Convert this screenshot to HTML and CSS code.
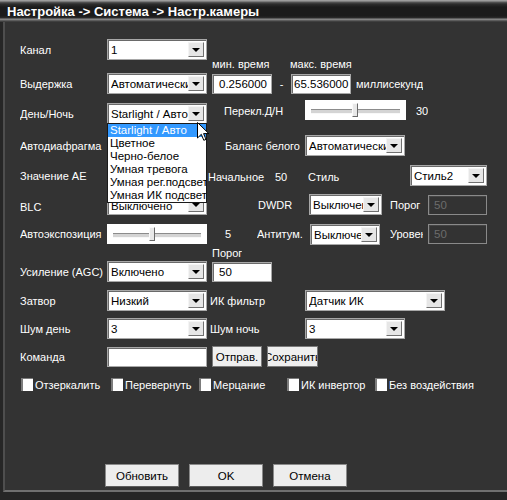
FILE: index.html
```html
<!DOCTYPE html>
<html lang="ru">
<head>
<meta charset="UTF-8">
<meta name="viewport" content="width=device-width, initial-scale=1.0">
<title>Настр.камеры</title>
<link rel="stylesheet" href="styles.css">
</head>
<body>

<div class="window">
  <div class="titlebar">Настройка -&gt; Система -&gt; Настр.камеры</div>

  <div class="content">
    <div class="row">
      <span class="label w87">Канал</span>
      <div class="select w100"><span class="val">1</span><span class="arrow"></span></div>
    </div>

    <div class="caption cap-time">
      <span class="label w78">мин. время</span>
      <span class="label">макс. время</span>
    </div>

    <div class="row mt3">
      <span class="label w87">Выдержка</span>
      <div class="select w100"><span class="val">Автоматически</span><span class="arrow"></span></div>
      <div class="input w60 ml5">0.256000</div>
      <span class="dash">-</span>
      <div class="input input-long w60">65.536000</div>
      <span class="label ml5">миллисекунд</span>
    </div>

    <div class="row mt9">
      <span class="label w87">День/Ночь</span>
      <div class="select w100"><span class="val">Starlight / Авто</span><span class="arrow"></span></div>
      <span class="label raised ml17 w81">Перекл.Д/Н</span>
      <div class="slider slider-top w101"><span class="thumb" style="left: 47px"></span></div>
      <span class="label raised ml10">30</span>
    </div>

    <div class="row mt11">
      <span class="label w87">Автодиафрагма</span>
      <!-- covered by the open list -->
      <div class="select w100"><span class="val"></span><span class="arrow"></span></div>
      <span class="label ml18 w80">Баланс белого</span>
      <div class="select w100"><span class="val">Автоматически</span><span class="arrow"></span></div>
    </div>

    <div class="row mt9">
      <span class="label w188">Значение AE</span>
      <span class="label w67 low">Начальное</span>
      <span class="label w33 low">50</span>
      <span class="label w102 low">Стиль</span>
      <div class="select w77"><span class="val">Стиль2</span><span class="arrow"></span></div>
    </div>

    <div class="row mt8">
      <span class="label w87 low2">BLC</span>
      <div class="select w100"><span class="val val-low">Выключено</span><span class="arrow"></span></div>
      <span class="label ml51 w51">DWDR</span>
      <div class="select w73"><span class="val">Выключено</span><span class="arrow"></span></div>
      <span class="label ml8 w38">Порог</span>
      <div class="input disabled w59">50</div>
    </div>

    <div class="row mt8">
      <span class="label w87">Автоэкспозиция</span>
      <div class="slider w100"><span class="thumb" style="left: 42px"></span></div>
      <span class="label ml18 w32">5</span>
      <span class="label w53">Антитум.</span>
      <div class="select select-low w70"><span class="val">Выключено</span><span class="arrow"></span></div>
      <span class="label ml10 w33">Уровень</span>
      <div class="input disabled ml5 w59">50</div>
    </div>

    <div class="caption cap-agc">
      <span class="label">Порог</span>
    </div>

    <div class="row mt2">
      <span class="label w87">Усиление (AGC)</span>
      <div class="select w100"><span class="val">Включено</span><span class="arrow"></span></div>
      <div class="input w60 ml5">50</div>
    </div>

    <div class="row mt8">
      <span class="label w87">Затвор</span>
      <div class="select w100"><span class="val">Низкий</span><span class="arrow"></span></div>
      <span class="label ml3 w95">ИК фильтр</span>
      <div class="select w140"><span class="val">Датчик ИК</span><span class="arrow"></span></div>
    </div>

    <div class="row mt7">
      <span class="label w87">Шум день</span>
      <div class="select w100"><span class="val">3</span><span class="arrow"></span></div>
      <span class="label ml3 w95">Шум ночь</span>
      <div class="select w100"><span class="val">3</span><span class="arrow"></span></div>
    </div>

    <div class="row mt7">
      <span class="label w87">Команда</span>
      <div class="input w100"></div>
      <div class="btn ml5 w50">Отправ.</div>
      <div class="btn ml5 w51"><span>Сохранить</span></div>
    </div>

    <div class="checks">
      <label class="check w90"><span class="box"></span>Отзеркалить</label>
      <label class="check w88"><span class="box"></span>Перевернуть</label>
      <label class="check w88"><span class="box"></span>Мерцание</label>
      <label class="check w88"><span class="box"></span>ИК инвертор</label>
      <label class="check"><span class="box"></span>Без воздействия</label>
    </div>

    <div class="footer">
      <div class="btn btn-big">Обновить</div>
      <div class="btn btn-big">OK</div>
      <div class="btn btn-big">Отмена</div>
    </div>
  </div>

  <!-- open list of the День/Ночь select -->
  <div class="dropdown">
    <div class="sel">Starlight / Авто</div>
    <div>Цветное</div>
    <div>Черно-белое</div>
    <div>Умная тревога</div>
    <div>Умная рег.подсветка</div>
    <div>Умная ИК подсветка</div>
  </div>

  <svg class="cursor" width="13" height="20" viewBox="0 0 13 20">
    <path d="M0.5 0.5 L0.5 16 L4.3 12.3 L6.8 18.3 L9 17.4 L6.6 11.6 L11.8 11.6 Z" fill="#fff" stroke="#000" stroke-width="1"/>
  </svg>
</div>

</body>
</html>
```

FILE: styles.css
```css
* {
  box-sizing: border-box;
}

body {
  margin: 0;
  background-color: #1e1e1e;
  font-family: "Liberation Sans", Arial, sans-serif;
  font-size: 11px;
  color: #fff;
}

.window {
  position: relative;
  width: 507px;
  height: 500px;
  background-color: #262626;
  overflow: hidden;
}

.titlebar {
  height: 22px;
  padding-left: 7px;
  line-height: 23px;
  font-size: 13px;
  font-weight: bold;
  white-space: nowrap;
  background: linear-gradient(to bottom, #9c9c9c 0, #9c9c9c 1px, #5a5a5a 2px, #2e2e2e 4px, #1b1b1b 7px, #1b1b1b 16px, #2c2c2c 18px, #8c8c8c 19px, #7a7a7a 20px, #404040 21px, #404040 22px);
}

.content {
  margin-left: 3px;
  height: 470px;
  background-color: #333;
  border-left: 2px solid #4e4e4e;
  border-bottom: 2px solid #707070;
  padding: 17px 0 0 15px;
}

.row {
  display: flex;
  align-items: center;
  height: 21px;
}

.caption {
  display: flex;
  align-items: center;
  height: 13px;
}

.cap-time {
  margin-top: -3px;
  padding-left: 192px;
}

.cap-agc {
  margin-top: 2px;
  padding-left: 192px;
}

.label {
  flex: none;
  white-space: nowrap;
  overflow: hidden;
}

.raised {
  margin-bottom: 6px;
}

.low {
  margin-top: 3px;
}

.low2 {
  margin-top: 5px;
}

/* widths */
.w32 { width: 32px; }
.w33 { width: 33px; }
.w38 { width: 38px; }
.w50 { width: 50px; }
.w51 { width: 51px; }
.w53 { width: 53px; }
.w59 { width: 59px; }
.w60 { width: 60px; }
.w67 { width: 67px; }
.w70 { width: 70px; }
.w73 { width: 73px; }
.w77 { width: 77px; }
.w78 { width: 78px; }
.w80 { width: 80px; }
.w81 { width: 81px; }
.w87 { width: 87px; }
.w88 { width: 88px; }
.w90 { width: 90px; }
.w95 { width: 95px; }
.w100 { width: 100px; }
.w101 { width: 101px; }
.w102 { width: 102px; }
.w140 { width: 140px; }
.w188 { width: 188px; }

/* spacing */
.ml3 { margin-left: 3px; }
.ml5 { margin-left: 5px; }
.ml8 { margin-left: 8px; }
.ml10 { margin-left: 10px; }
.ml17 { margin-left: 17px; }
.ml18 { margin-left: 18px; }
.ml51 { margin-left: 51px; }
.mt2 { margin-top: 2px; }
.mt3 { margin-top: 3px; }
.mt7 { margin-top: 7px; }
.mt8 { margin-top: 8px; }
.mt9 { margin-top: 9px; }
.mt11 { margin-top: 11px; }

.select {
  flex: none;
  display: flex;
  align-items: center;
  height: 21px;
  padding: 0 2px 0 3px;
  background-color: #fff;
  border: 1px solid #a8a8a8;
  box-shadow: inset 1px 1px 0 #6a6a6a;
  color: #000;
  font-size: 11.5px;
}

.select-low {
  margin-top: 2px;
}

.select .val {
  flex: 1;
  min-width: 0;
  overflow: hidden;
  white-space: nowrap;
}

.select .val-low {
  padding-top: 3px;
}

.arrow {
  flex: none;
  display: flex;
  align-items: center;
  justify-content: center;
  width: 16px;
  height: 15px;
  background-color: #e6e6e6;
  border: 1px solid;
  border-color: #f4f4f4 #707070 #707070 #f4f4f4;
}

.arrow::after {
  content: "";
  border-left: 4px solid transparent;
  border-right: 4px solid transparent;
  border-top: 4px solid #000;
}

.input {
  flex: none;
  display: flex;
  align-items: center;
  height: 20px;
  padding-left: 6px;
  background-color: #fff;
  border: 1px solid #a8a8a8;
  box-shadow: inset 1px 1px 0 #6a6a6a;
  color: #000;
  font-size: 11.5px;
  white-space: nowrap;
  overflow: hidden;
}

.input-long {
  padding-left: 2px;
}

.input.disabled {
  background-color: #333;
  border-color: #8a8a8a;
  box-shadow: inset 1px 1px 0 #444;
  color: #6c6c6c;
  padding-left: 5px;
}

.dash {
  flex: none;
  width: 19px;
  text-align: center;
}

.slider {
  position: relative;
  flex: none;
  height: 20px;
  background-color: #fff;
}

.slider-top {
  align-self: flex-start;
  margin-top: -3px;
}

.slider::before {
  content: "";
  position: absolute;
  left: 6px;
  right: 6px;
  top: 9px;
  height: 3px;
  background-color: #d4d4d4;
  border-top: 1px solid #8c8c8c;
  border-bottom: 1px solid #f8f8f8;
}

.thumb {
  position: absolute;
  top: 3px;
  width: 6px;
  height: 14px;
  background-color: #e8e8e8;
  border: 1px solid;
  border-color: #fafafa #6a6a6a #6a6a6a #fafafa;
}

.btn {
  flex: none;
  display: flex;
  align-items: center;
  justify-content: center;
  height: 21px;
  background-color: #efefef;
  border: 1px solid #7a7a7a;
  color: #000;
  font-size: 11.5px;
  white-space: nowrap;
  overflow: hidden;
}

.checks {
  display: flex;
  align-items: center;
  height: 13px;
  margin-top: 11px;
  margin-left: 1px;
}

.check {
  flex: none;
  display: flex;
  align-items: center;
  white-space: nowrap;
}

.box {
  width: 12px;
  height: 13px;
  margin-right: 2px;
  background-color: #fff;
  border-left: 2px solid #7c7c7c;
  border-top: 1px solid #7c7c7c;
}

.footer {
  display: flex;
  gap: 10px;
  margin-top: 73px;
  margin-left: 85px;
}

.btn-big {
  width: 74px;
  height: 23px;
  background-color: #ededed;
  border: 1px solid #8a8a8a;
  border-bottom-color: #5c5c5c;
}

.dropdown {
  position: absolute;
  left: 107px;
  top: 123px;
  width: 100px;
  background-color: #fff;
  border: 1px solid #1a1a1a;
  color: #000;
  font-size: 11.5px;
}

.dropdown div {
  height: 13px;
  line-height: 13px;
  padding-left: 2px;
  white-space: nowrap;
  overflow: hidden;
}

.dropdown .sel {
  background-color: #3399ff;
  color: #fff;
}

.cursor {
  position: absolute;
  left: 197px;
  top: 122px;
}
```
